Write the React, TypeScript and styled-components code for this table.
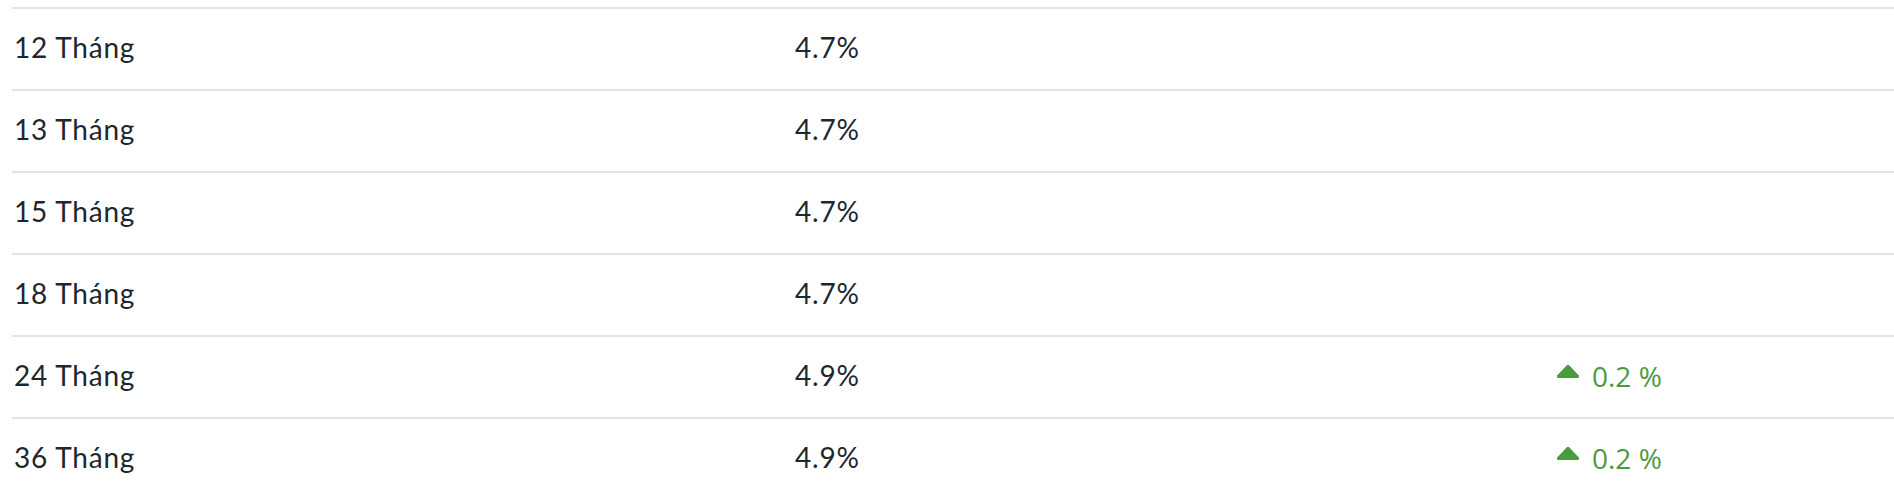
import React from "react";
import styled, { createGlobalStyle } from "styled-components";

const Global = createGlobalStyle`
  html, body { margin: 0; padding: 0; background: #ffffff; }
  body { font-family: Lato, "Noto Sans", sans-serif; color: #1e272e; }
`;

const Table = styled.div`
  display: flex;
  flex-direction: column;
  padding: 7px 0 0 12px;
`;

const Row = styled.div`
  display: grid;
  grid-template-columns: 781px 763px 1fr;
  align-items: center;
  height: 80px;
  border-top: 2px solid #e3e3e3;
`;

const Cell = styled.div`
  padding-left: 2px;
  font-family: Lato, "Noto Sans", sans-serif;
  font-size: 28px;
  letter-spacing: 0.8px;
  color: #1e272e;
  line-height: 1;
  padding-bottom: 4px;
`;

const Change = styled.div`
  display: flex;
  align-items: center;
  gap: 12px;
  color: #4a9b3f;
  font-family: "Open Sans", "Noto Sans", sans-serif;
  font-size: 28px;
  line-height: 1;
  padding-bottom: 2px;
`;

const Arrow = styled.svg`
  width: 24px;
  height: 14px;
  margin-top: -10px;
  flex: none;
`;

type Item = { term: string; rate: string; change?: string };

const data: Item[] = [
  { term: "12 Tháng", rate: "4.7%" },
  { term: "13 Tháng", rate: "4.7%" },
  { term: "15 Tháng", rate: "4.7%" },
  { term: "18 Tháng", rate: "4.7%" },
  { term: "24 Tháng", rate: "4.9%", change: "0.2 %" },
  { term: "36 Tháng", rate: "4.9%", change: "0.2 %" },
];

export default function App() {
  return (
    <>
      <Global />
      <Table>
        {data.map((d) => (
          <Row key={d.term}>
            <Cell>{d.term}</Cell>
            <Cell>{d.rate}</Cell>
            {d.change ? (
              <Change>
                <Arrow viewBox="0 0 24 14">
                  <path d="M10.6 1.4 Q12 0 13.4 1.4 L22.6 11.2 Q24 14 21 14 L3 14 Q0 14 1.4 11.2 Z" fill="#4a9b3f" />
                </Arrow>
                <span>{d.change}</span>
              </Change>
            ) : (
              <div />
            )}
          </Row>
        ))}
      </Table>
    </>
  );
}
